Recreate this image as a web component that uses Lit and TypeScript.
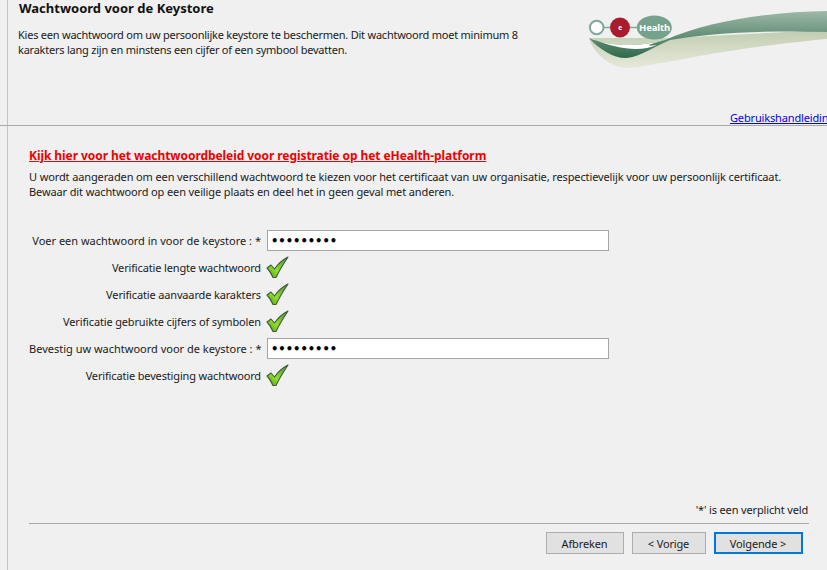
import { LitElement, html, css, svg } from 'lit';
import { customElement } from 'lit/decorators.js';

const check = svg`
  <svg class="check" width="23" height="23" viewBox="0 0 23 23" aria-hidden="true">
    <defs>
      <linearGradient id="chk" x1="0" y1="1" x2="1" y2="0">
        <stop offset="0" stop-color="#4f9a16" />
        <stop offset="0.4" stop-color="#8fe02a" />
        <stop offset="0.75" stop-color="#6cae3a" />
        <stop offset="1" stop-color="#5d8c52" />
      </linearGradient>
    </defs>
    <path d="M1 12 L5 9 L8.5 13 C12 8 16 4 22 1 C18 7 13.5 14 10 21.5 L7 21.5 C5.5 18 3.5 14.5 1 12 Z"
      fill="url(#chk)" stroke="#3f5a38" stroke-width="1.1" stroke-linejoin="round" />
  </svg>
`;

@customElement('app-root')
export class AppRoot extends LitElement {
  static styles = css`
    :host {
      display: block;
      width: 827px;
      height: 570px;
      overflow: hidden;
      background: #f0f0f0;
      font-family: 'Noto Sans', sans-serif;
      font-size: 11px;
      letter-spacing: -0.15px;
      color: #1a1a1a;
    }

    .frame {
      display: flex;
      flex-direction: column;
      height: 570px;
      margin-left: 7px;
      border-left: 1px solid #c4c4c4;
      box-sizing: border-box;
    }

    .header {
      position: relative;
      height: 126px;
      flex: none;
      box-sizing: border-box;
      border-bottom: 1px solid #a9a9a9;
      margin-left: -8px;
      padding: 0 0 0 19px;
    }

    .logo {
      position: absolute;
      left: 570px;
      top: 0;
    }

    h1 {
      margin: 0;
      font-size: 13px;
      letter-spacing: 0;
      line-height: 17px;
      font-weight: 700;
      color: #111;
    }

    .intro {
      margin: 10px 0 0 -1px;
      width: 510px;
      line-height: 15px;
      letter-spacing: -0.23px;
    }

    .manual {
      position: absolute;
      left: 730px;
      top: 110px;
      color: #0000ee;
      white-space: nowrap;
      line-height: 15px;
    }

    .body {
      flex: 1;
      display: flex;
      flex-direction: column;
      padding: 22px 18px 0 21px;
    }

    .policy {
      color: #f00000;
      font-size: 12px;
      letter-spacing: -0.07px;
      font-weight: 700;
      line-height: 15px;
    }

    .explain {
      margin: 6px 0 0;
      line-height: 15px;
      white-space: nowrap;
      letter-spacing: -0.12px;
    }

    .form {
      margin-top: 31px;
      display: grid;
      grid-template-columns: 232px 342px;
      grid-auto-rows: 21px;
      row-gap: 6px;
      column-gap: 6px;
      align-items: center;
    }

    .label {
      text-align: right;
      white-space: nowrap;
    }

    .label.mandatory {
      letter-spacing: 0;
    }

    input {
      width: 342px;
      height: 21px;
      box-sizing: border-box;
      border: 1px solid #a5a5a5;
      background: #fff;
      padding: 0 3px;
      font-size: 11.5px;
      font-weight: 700;
      font-family: 'DejaVu Sans', sans-serif;
      letter-spacing: 0;
      color: #000;
      outline: none;
    }

    .check {
      display: block;
      margin-left: -1px;
    }

    .foot {
      margin-top: auto;
      padding-bottom: 16px;
    }

    .required {
      text-align: right;
      line-height: 15px;
      margin-right: 1px;
    }

    .rule {
      height: 1px;
      background: #a9a9a9;
      margin-top: 6px;
    }

    .actions {
      display: flex;
      justify-content: flex-end;
      gap: 8px;
      margin: 8px 6px 0 0;
    }

    button {
      height: 22px;
      box-sizing: border-box;
      border: 1px solid #adadad;
      background: #e1e1e1;
      font: inherit;
      letter-spacing: inherit;
      color: #1a1a1a;
      padding: 0 1px 0 0;
    }

    .abort { width: 78px; }
    .prev { width: 74px; }
    .next {
      width: 89px;
      border: 2px solid #0078d7;
    }
  `;

  private _row(label: string) {
    return html`<div class="label">${label}</div><div>${check}</div>`;
  }

  render() {
    return html`
      <div class="frame">
        <header class="header">
          <svg class="logo" width="257" height="80" viewBox="0 0 257 80" aria-hidden="true">
            <defs>
              <linearGradient id="sw" x1="0" y1="0" x2="0" y2="1">
                <stop offset="0" stop-color="#9fb9a9" />
                <stop offset="1" stop-color="#2f6a4c" />
              </linearGradient>
              <linearGradient id="pale" x1="0" y1="0" x2="0" y2="1">
                <stop offset="0" stop-color="#c0ccb0" />
                <stop offset="1" stop-color="#e6e9da" />
              </linearGradient>
            </defs>
            <path d="M19 38 C24 55 42 68 57 68 C90 66 140 50 257 39 L257 30 L100 38 Z" fill="url(#pale)" />
            <path d="M19 38 C30 50 45 59 57 58 C72 56 85 46 100 40 C140 33 200 30 257 32 L257 11 C200 12 140 20 95 40 C70 47 40 47 19 38 Z" fill="url(#sw)" />
            <path d="M19 38 C40 47 70 47 95 40 C80 44 72 47 87 45 C70 52 50 50 19 38 Z" fill="#fff" />
            <line x1="34" y1="27.5" x2="100" y2="27.5" stroke="#7fa898" stroke-width="1.5" />
            <circle cx="26.7" cy="27.5" r="6.8" fill="#fff" stroke="#7fa898" stroke-width="2" />
            <circle cx="50" cy="27.5" r="10" fill="#a81c2c" />
            <text x="50" y="29.5" text-anchor="middle" fill="#fff" font-size="6.5" font-weight="700">e</text>
            <ellipse cx="84.3" cy="27.5" rx="17.5" ry="12" fill="#76a18c" />
            <text x="84.5" y="31" text-anchor="middle" fill="#fff" font-size="9.5" font-weight="700">Health</text>
          </svg>
          <h1>Wachtwoord voor de Keystore</h1>
          <p class="intro">Kies een wachtwoord om uw persoonlijke keystore te beschermen. Dit wachtwoord moet minimum 8 karakters lang zijn en minstens een cijfer of een symbool bevatten.</p>
          <a class="manual" href="#">Gebruikshandleiding</a>
        </header>
        <section class="body">
          <a class="policy" href="#">Kijk hier voor het wachtwoordbeleid voor registratie op het eHealth-platform</a>
          <p class="explain">U wordt aangeraden om een verschillend wachtwoord te kiezen voor het certificaat van uw organisatie, respectievelijk voor uw persoonlijk certificaat.<br />Bewaar dit wachtwoord op een veilige plaats en deel het in geen geval met anderen.</p>
          <div class="form">
            <div class="label mandatory">Voer een wachtwoord in voor de keystore : *</div>
            <input type="password" .value=${'123456789'} />
            ${this._row('Verificatie lengte wachtwoord')}
            ${this._row('Verificatie aanvaarde karakters')}
            ${this._row('Verificatie gebruikte cijfers of symbolen')}
            <div class="label mandatory">Bevestig uw wachtwoord voor de keystore : *</div>
            <input type="password" .value=${'123456789'} />
            ${this._row('Verificatie bevestiging wachtwoord')}
          </div>
          <div class="foot">
            <div class="required">'*' is een verplicht veld</div>
            <div class="rule"></div>
            <div class="actions">
              <button class="abort">Afbreken</button>
              <button class="prev">&lt; Vorige</button>
              <button class="next">Volgende &gt;</button>
            </div>
          </div>
        </section>
      </div>
    `;
  }
}
